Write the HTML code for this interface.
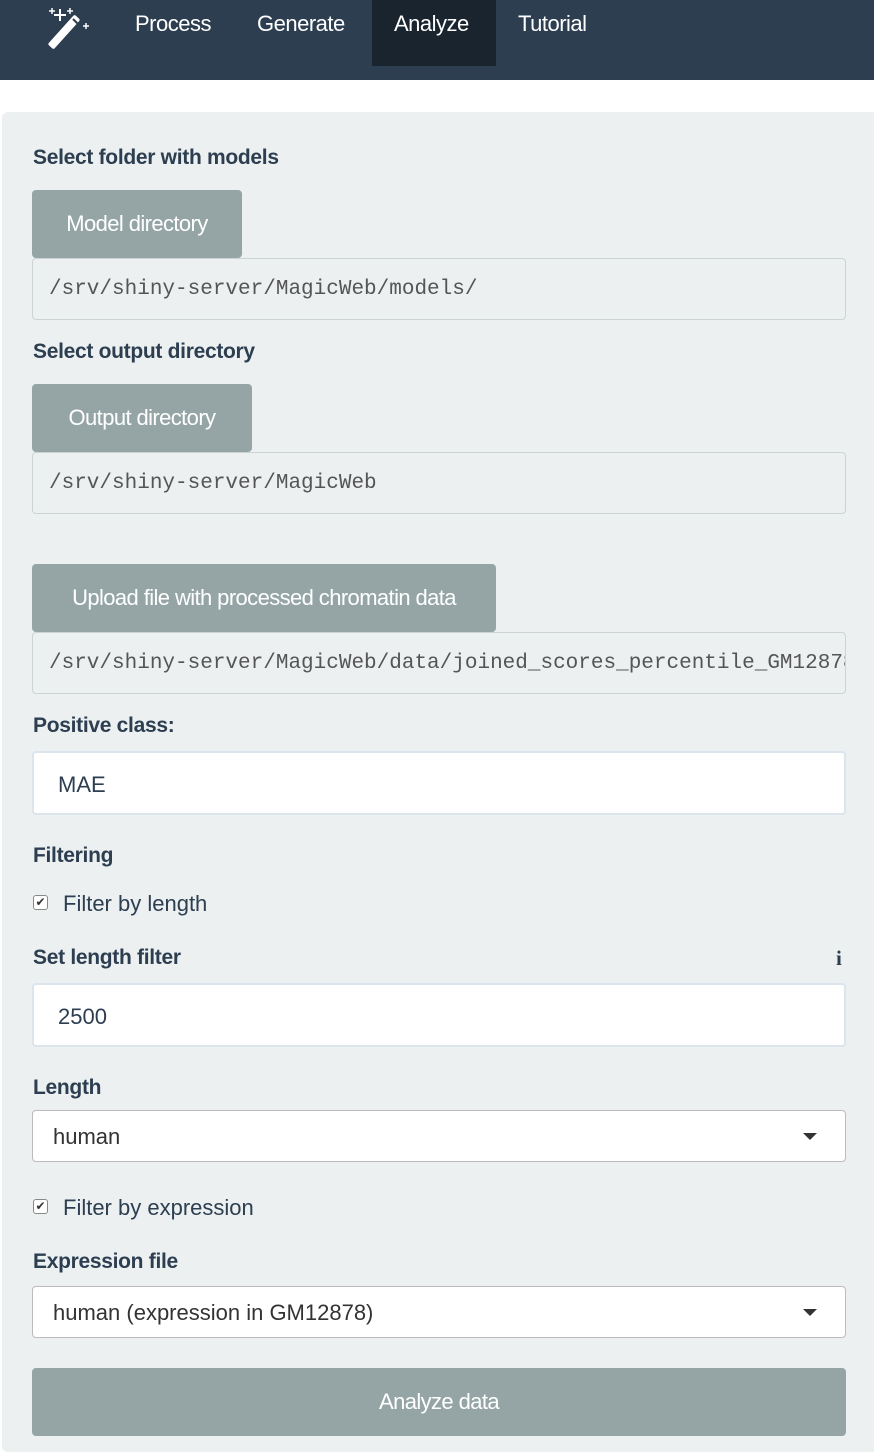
<!DOCTYPE html>
<html><head><meta charset="utf-8"><style>
*{box-sizing:border-box;margin:0;padding:0}
body{width:874px;height:1444px;overflow:hidden;background:#fff;font-family:"Liberation Sans",sans-serif;color:#2c3e50;position:relative}
.nav{position:absolute;left:0;top:0;width:874px;height:80px;background:#2c3e50}
.nav .t{position:absolute;top:11px;color:#fff;font-size:22px;letter-spacing:-0.5px}
.act{position:absolute;left:372px;top:0;width:124px;height:66px;background:#1a242f}
.panel{position:absolute;left:2px;top:112px;width:880px;height:1340px;background:#ecf0f1;border-radius:6px}
.a{position:absolute}
.lbl{font-size:21px;font-weight:bold;letter-spacing:-0.3px;color:#2c3e50}
.btn{background:#95a5a6;color:#fff;font-size:22px;letter-spacing:-0.6px;border-radius:4px;display:flex;align-items:center;justify-content:center}
.ro{left:32px;width:814px;height:62px;border:1px solid #ccd3d5;border-radius:4px;background:#ecf0f1;font-family:"Liberation Mono",monospace;font-size:21px;color:#555;padding:19px 0 0 16px;white-space:nowrap;overflow:hidden}
.inp{left:32px;width:814px;height:64px;border:2px solid #dce4ec;border-radius:4px;background:#fff;font-size:22px;padding:19px 0 0 24px;color:#2c3e50}
.sel{left:32px;width:814px;height:52px;border:1px solid #bbb;border-radius:4px;background:#fff;font-size:22px;padding:13px 0 0 20px;color:#333}
.sel:after{content:"";position:absolute;right:28px;top:22px;border-left:7px solid transparent;border-right:7px solid transparent;border-top:7px solid #333}
.cb{left:33px;width:15px;height:15px;border:1px solid #888;border-radius:3px;background:#fff;font-size:12px;line-height:13px;text-align:center;color:#333}
.ct{font-size:22px;color:#2c3e50}
</style></head><body>
<div class="nav">
<div class="act"></div>
<svg class="a" style="left:46px;top:6px" width="46" height="44" viewBox="0 0 46 44">
<rect x="14" y="6" width="8" height="40" rx="2" fill="#fff" transform="rotate(42 18 26)"/>
<line x1="27" y1="13" x2="33" y2="19" stroke="#2c3e50" stroke-width="2"/>
<path d="M14 3v12M8 9h12" stroke="#fff" stroke-width="2"/>
<path d="M6 2v6M3 5h6M24 2v6M21 5h6M40 17v6M37 20h6" stroke="#fff" stroke-width="1.5"/>
</svg>
<div class="t" style="left:135px">Process</div>
<div class="t" style="left:257px">Generate</div>
<div class="t" style="left:394px">Analyze</div>
<div class="t" style="left:518px">Tutorial</div>
</div>
<div class="panel"></div>
<div class="a lbl" style="left:33px;top:146px">Select folder with models</div>
<div class="a btn" style="left:32px;top:190px;width:210px;height:68px">Model directory</div>
<div class="a ro" style="top:258px">/srv/shiny-server/MagicWeb/models/</div>
<div class="a lbl" style="left:33px;top:340px">Select output directory</div>
<div class="a btn" style="left:32px;top:384px;width:220px;height:68px">Output directory</div>
<div class="a ro" style="top:452px">/srv/shiny-server/MagicWeb</div>
<div class="a btn" style="left:32px;top:564px;width:464px;height:68px">Upload file with processed chromatin data</div>
<div class="a ro" style="top:632px">/srv/shiny-server/MagicWeb/data/joined_scores_percentile_GM12878</div>
<div class="a lbl" style="left:33px;top:714px">Positive class:</div>
<div class="a inp" style="top:751px">MAE</div>
<div class="a lbl" style="left:33px;top:844px">Filtering</div>
<div class="a cb" style="top:895px">✔</div>
<div class="a ct" style="left:63px;top:891px">Filter by length</div>
<div class="a lbl" style="left:33px;top:946px">Set length filter</div>
<div class="a" style="left:836px;top:946px;font-family:'Liberation Serif',serif;font-weight:bold;font-size:21px">i</div>
<div class="a inp" style="top:983px">2500</div>
<div class="a lbl" style="left:33px;top:1076px">Length</div>
<div class="a sel" style="top:1110px">human</div>
<div class="a cb" style="top:1199px">✔</div>
<div class="a ct" style="left:63px;top:1195px">Filter by expression</div>
<div class="a lbl" style="left:33px;top:1250px">Expression file</div>
<div class="a sel" style="top:1286px">human (expression in GM12878)</div>
<div class="a btn" style="left:32px;top:1368px;width:814px;height:68px">Analyze data</div>
</body></html>
